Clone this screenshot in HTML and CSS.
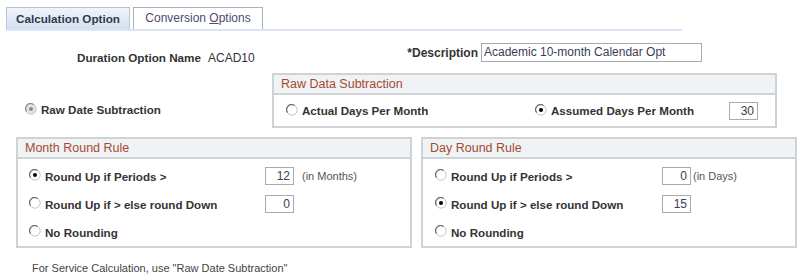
FILE: index.html
```html
<!DOCTYPE html>
<html>
<head>
<meta charset="utf-8">
<link rel="stylesheet" href="styles.css">
</head>
<body>
<div class="tabbar">
  <div class="tab tab-active">Calculation Option</div>
  <div class="tab tab-idle">Conversion <u>O</u>ptions</div>
</div>

<div class="row1">
  <div class="dur-label">Duration Option Name</div>
  <div class="dur-value">ACAD10</div>
  <div class="desc-label">*Description</div>
  <div class="field desc-input">Academic 10-month Calendar Opt</div>
</div>

<div class="row2">
  <div class="raw-left">
    <label class="opt"><svg class="radio" width="12" height="12" viewBox="0 0 12 12"><circle cx="6" cy="6" r="5.2" fill="#e4e4e4" stroke="#c4c4c4" stroke-width="1"/><path d="M1.6 8.6 A5 5 0 0 1 8.6 1.6" fill="none" stroke="#8c8c8c" stroke-width="1.2"/><circle cx="6" cy="6" r="2" fill="#8a8a8a"/></svg>Raw Date Subtraction</label>
  </div>
  <div class="box box-raw">
    <div class="box-head">Raw Data Subtraction</div>
    <div class="raw-body">
      <label class="opt"><svg class="radio" width="12" height="12" viewBox="0 0 12 12"><circle cx="6" cy="6" r="5.2" fill="#fff" stroke="#c4c4c4" stroke-width="1"/><path d="M1.6 8.6 A5 5 0 0 1 8.6 1.6" fill="none" stroke="#6e6e6e" stroke-width="1.2"/></svg>Actual Days Per Month</label>
      <label class="opt"><svg class="radio" width="12" height="12" viewBox="0 0 12 12"><circle cx="6" cy="6" r="5.2" fill="#fff" stroke="#c4c4c4" stroke-width="1"/><path d="M1.6 8.6 A5 5 0 0 1 8.6 1.6" fill="none" stroke="#6e6e6e" stroke-width="1.2"/><circle cx="6" cy="6" r="2" fill="#000"/></svg>Assumed Days Per Month</label>
      <div class="field num">30</div>
    </div>
  </div>
</div>

<div class="row3">
  <div class="box box-month">
    <div class="box-head">Month Round Rule</div>
    <div class="rule-body month-body">
      <label class="opt"><svg class="radio" width="12" height="12" viewBox="0 0 12 12"><circle cx="6" cy="6" r="5.2" fill="#fff" stroke="#c4c4c4" stroke-width="1"/><path d="M1.6 8.6 A5 5 0 0 1 8.6 1.6" fill="none" stroke="#6e6e6e" stroke-width="1.2"/><circle cx="6" cy="6" r="2" fill="#000"/></svg>Round Up if Periods &gt;</label>
      <div class="field num">12</div>
      <div class="note">(in Months)</div>

      <label class="opt"><svg class="radio" width="12" height="12" viewBox="0 0 12 12"><circle cx="6" cy="6" r="5.2" fill="#fff" stroke="#c4c4c4" stroke-width="1"/><path d="M1.6 8.6 A5 5 0 0 1 8.6 1.6" fill="none" stroke="#6e6e6e" stroke-width="1.2"/></svg>Round Up if &gt; else round Down</label>
      <div class="field num">0</div>
      <div class="note"></div>

      <label class="opt"><svg class="radio" width="12" height="12" viewBox="0 0 12 12"><circle cx="6" cy="6" r="5.2" fill="#fff" stroke="#c4c4c4" stroke-width="1"/><path d="M1.6 8.6 A5 5 0 0 1 8.6 1.6" fill="none" stroke="#6e6e6e" stroke-width="1.2"/></svg>No Rounding</label>
      <div></div>
      <div></div>
    </div>
  </div>
  <div class="box box-day">
    <div class="box-head">Day Round Rule</div>
    <div class="rule-body day-body">
      <label class="opt"><svg class="radio" width="12" height="12" viewBox="0 0 12 12"><circle cx="6" cy="6" r="5.2" fill="#fff" stroke="#c4c4c4" stroke-width="1"/><path d="M1.6 8.6 A5 5 0 0 1 8.6 1.6" fill="none" stroke="#6e6e6e" stroke-width="1.2"/></svg>Round Up if Periods &gt;</label>
      <div class="field num">0</div>
      <div class="note">(in Days)</div>

      <label class="opt"><svg class="radio" width="12" height="12" viewBox="0 0 12 12"><circle cx="6" cy="6" r="5.2" fill="#fff" stroke="#c4c4c4" stroke-width="1"/><path d="M1.6 8.6 A5 5 0 0 1 8.6 1.6" fill="none" stroke="#6e6e6e" stroke-width="1.2"/><circle cx="6" cy="6" r="2" fill="#000"/></svg>Round Up if &gt; else round Down</label>
      <div class="field num">15</div>
      <div class="note"></div>

      <label class="opt"><svg class="radio" width="12" height="12" viewBox="0 0 12 12"><circle cx="6" cy="6" r="5.2" fill="#fff" stroke="#c4c4c4" stroke-width="1"/><path d="M1.6 8.6 A5 5 0 0 1 8.6 1.6" fill="none" stroke="#6e6e6e" stroke-width="1.2"/></svg>No Rounding</label>
      <div></div>
      <div></div>
    </div>
  </div>
</div>

<div class="footer">For Service Calculation, use "Raw Date Subtraction"</div>
</body>
</html>
```

FILE: styles.css
```css
html, body {
  margin: 0;
  padding: 0;
  background: #ffffff;
}
body {
  font-family: "Liberation Sans", Arial, sans-serif;
  font-size: 12px;
  color: #333333;
  width: 805px;
  height: 280px;
  overflow: hidden;
}

/* tabs */
.tabbar {
  display: flex;
  gap: 3px;
  margin: 7px 0 0 6px;
  width: 676px;
  border-bottom: 2px solid #dbe4f4;
}
.tab {
  box-sizing: border-box;
  height: 22px;
  line-height: 21px;
  text-align: center;
  border: 1px solid #b9c3d1;
  border-bottom: none;
  font-size: 12px;
}
.tab-active {
  width: 124px;
  font-weight: bold;
  font-size: 11.7px;
  color: #2f3a4a;
  background: linear-gradient(#f0f4fa, #d5dff0);
}
.tab-idle {
  width: 130px;
  color: #4b4b70;
  background: #ffffff;
  border-color: #a9b1ba;
}
.tab-idle u {
  text-decoration-color: #4b4b70;
}

/* first row */
.row1 {
  display: flex;
  align-items: flex-start;
  line-height: 14px;
}
.dur-label {
  width: 201px;
  text-align: right;
  font-weight: bold;
  font-size: 11.7px;
  margin-top: 20px;
}
.dur-value {
  width: 150px;
  margin-left: 7px;
  margin-top: 20px;
  color: #333333;
}
.desc-label {
  width: 120px;
  text-align: right;
  font-weight: bold;
  margin-top: 15px;
}
.field {
  box-sizing: border-box;
  border: 1px solid #aaaaaa;
  background: #ffffff;
  color: #3c3c58;
  font-size: 12px;
  height: 18px;
  line-height: 16px;
  white-space: nowrap;
}
.desc-input {
  width: 221px;
  height: 19px;
  line-height: 17px;
  margin-left: 3px;
  margin-top: 12px;
  padding-left: 2px;
}
.num {
  width: 29px;
  text-align: right;
  padding-right: 3px;
}

/* options */
.opt {
  display: flex;
  align-items: center;
  font-weight: bold;
  font-size: 11.6px;
  color: #333333;
  white-space: nowrap;
}
.radio {
  flex: none;
  margin-right: 4px;
  margin-top: -2px;
}

/* row 2 */
.row2 {
  display: flex;
  margin-top: 8px;
}
.raw-left {
  width: 272px;
  box-sizing: border-box;
  padding: 30px 0 0 25px;
  line-height: 14px;
}

.box {
  box-sizing: border-box;
  border: 2px solid #cfd3d6;
}
.box-head {
  height: 18px;
  line-height: 18px;
  padding-left: 7px;
  background: #f0f3f5;
  border-bottom: 2px solid #cfd3d6;
  color: #a54a2e;
  font-size: 12.5px;
}
.box-raw {
  width: 505px;
  height: 55px;
}
.raw-body {
  display: grid;
  grid-template-columns: 249px 194px 29px;
  align-items: center;
  padding-left: 12px;
  height: 31px;
}

/* row 3 */
.row3 {
  display: flex;
  gap: 9px;
  margin: 9px 0 0 16px;
}
.box-month {
  width: 396px;
  height: 111px;
}
.box-day {
  width: 376px;
  height: 111px;
}
.rule-body {
  display: grid;
  grid-auto-rows: 28px;
  align-items: center;
  padding-top: 3px;
}
.month-body {
  grid-template-columns: 236px 29px auto;
  padding-left: 11px;
}
.day-body {
  grid-template-columns: 227px 29px auto;
  padding-left: 12px;
}
.note {
  font-size: 11px;
  color: #555555;
  white-space: nowrap;
}
.month-body .note {
  padding-left: 8px;
}
.day-body .note {
  padding-left: 2px;
}

.footer {
  margin: 14px 0 0 32px;
  font-size: 11px;
  line-height: 12px;
  color: #444444;
}
```
